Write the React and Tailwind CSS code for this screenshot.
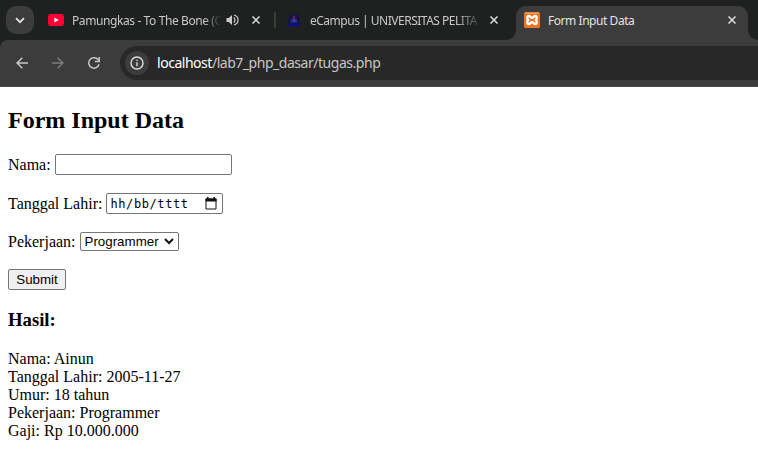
function Cross() {
  return (
    <svg width="8" height="8" viewBox="0 0 8 8" className="block shrink-0" stroke="#dedede" strokeWidth="1.5">
      <path d="M0.5 0.5 7.5 7.5M7.5 0.5 0.5 7.5" />
    </svg>
  );
}

function Speaker() {
  return (
    <svg width="13" height="12" viewBox="0 0 13 12" className="shrink-0" fill="none" stroke="#c9c9c9" strokeWidth="1.2">
      <path d="M.5 4h2.3L6 1v10L2.8 8H.5z" fill="#c9c9c9" stroke="none" />
      <path d="M7.8 3.4q2.4 2.6 0 5.2M8 1c5.4 1.4 5.4 8.6 0 10" />
    </svg>
  );
}

function Crest() {
  return (
    <svg width="14" height="16" viewBox="0 0 14 16" className="shrink-0">
      <path d="M1 8Q1 1.500 7 1.500T13 8l-1 4H2z" fill="#141440" />
      <path d="M4.500 6.500h5l1.500 4H3z" fill="#20279a" />
      <path d="M7 3.500v3" stroke="#a82420" strokeWidth="1.500" />
      <circle cx="7" cy="8.500" r="1.500" fill="#3346a5" />
      <path d="M1 11.500h12v3H1z" fill="#10107c" />
    </svg>
  );
}

function Xampp() {
  return (
    <svg width="16" height="16" viewBox="0 0 16 16" className="shrink-0">
      <rect width="16" height="16" rx="1.500" fill="#ed7522" />
      <path d="M1.500 1.200h13" stroke="#f8bd91" strokeWidth=".8" />
      <path
        d="M5 4C3 4 2.700 6.200 4.200 8 2.700 9.800 3 12 5 12c2 0 1.500-2 3-2s1 2 3 2 2.300-2.200.8-4c1.500-1.800 1.200-4-.8-4S9.500 6 8 6 7 4 5 4z"
        fill="none"
        stroke="#fff"
        strokeWidth="2.300"
      />
      <path d="M6 8h4" stroke="#ed7522" strokeWidth="1.600" />
    </svg>
  );
}

function TabStrip() {
  return (
    <div className="flex h-10 w-full items-center bg-[#1f2020] text-[12px] leading-5 text-[#c9c9c9]">
      <button className="ml-1.5 flex h-7 w-7 shrink-0 items-center justify-center rounded-[10px] bg-[#3c3c3c]">
        <svg width="10" height="7" viewBox="0 0 10 7" fill="none" stroke="#e3e3e3" strokeWidth="1.8">
          <path d="M1 1.200 5 5.200 9 1.200" />
        </svg>
      </button>
      <div className="flex w-[240px] shrink-0 items-center pl-3.5">
        <svg width="16" height="12" viewBox="0 0 16 12" className="shrink-0">
          <rect width="16" height="12" rx="3" fill="#ff0033" />
          <path d="M6.300 3.400v5.200L10.800 6z" fill="#fff" />
        </svg>
        <div className="ml-2 mr-1.5 w-[148px] overflow-hidden pt-0.5 whitespace-nowrap tracking-[-0.4px] [mask-image:linear-gradient(to_right,#000_132px,transparent_149px)]">
          Pamungkas - To The Bone (O
        </div>
        <Speaker />
        <div className="ml-[13px]"><Cross /></div>
      </div>
      <div className="h-4 w-0.5 shrink-0 bg-[#3c3c3c]" />
      <div className="flex w-[230px] shrink-0 items-center pl-[11px]">
        <Crest />
        <div className="ml-[9px] w-[167px] pt-0.5 whitespace-nowrap tracking-[-0.49px] [mask-image:linear-gradient(to_right,#000_146px,transparent_174px)]">
          eCampus | UNIVERSITAS PELITA
        </div>
        <div className="ml-[13px]"><Cross /></div>
      </div>
      <svg width="10" height="10" viewBox="0 0 10 10" className="shrink-0 self-end">
        <path d="M10 0v10H0A10 10 0 0 0 10 0z" fill="#3c3c3c" />
      </svg>
      <div className="flex h-[34px] w-[232px] shrink-0 items-center self-end rounded-t-[10px] bg-[#3c3c3c] pb-1.5 pl-2 text-[#e3e3e3]">
        <Xampp />
        <span className="ml-2 w-[180px] pt-0.5 whitespace-nowrap tracking-[-0.45px]">Form Input Data</span>
        <Cross />
      </div>
      <svg width="10" height="10" viewBox="0 0 10 10" className="shrink-0 self-end">
        <path d="M0 0v10h10A10 10 0 0 1 0 0z" fill="#3c3c3c" />
      </svg>
    </div>
  );
}

function Toolbar() {
  return (
    <div className="bg-[#1f2020]">
      <div className="flex h-[47px] items-center rounded-tl-[8px] border-b border-[#484848] bg-[#3c3c3c] pl-4">
        <svg width="12" height="12" viewBox="0 0 12 12" fill="none" stroke="#c7c7c7" strokeWidth="1.500" className="shrink-0">
          <path d="M12 6H1M6.300.7 1 6l5.300 5.300" />
        </svg>
        <svg width="12" height="12" viewBox="0 0 12 12" fill="none" stroke="#7c7c7c" strokeWidth="1.500" className="ml-6 shrink-0">
          <path d="M0 6h11M5.700.7 11 6l-5.300 5.300" />
        </svg>
        <svg width="12" height="12" viewBox="0 0 12 12" fill="none" stroke="#c7c7c7" strokeWidth="1.500" className="ml-6 shrink-0">
          <path d="M11 7.200A5.200 5.200 0 1 1 9.700 2.300L11.200 4" />
          <path d="M11.200 0v4.500H6.800" />
        </svg>
        <div className="ml-5 flex h-[34px] flex-1 items-center rounded-l-full bg-[#282828] pl-[5px]">
          <div className="flex h-6 w-6 items-center justify-center rounded-full bg-[#3c3c3c]">
            <svg width="14" height="14" viewBox="0 0 14 14" fill="none" stroke="#dedede" strokeWidth="1.400">
              <circle cx="7" cy="7" r="6" />
              <path d="M7 6.200V10.200M7 3.700v1.400" />
            </svg>
          </div>
          <span className="ml-2 whitespace-nowrap text-[14px] leading-5 tracking-[-0.47px] text-[#c7c7c7]">
            <span className="text-white">localhost</span>/lab7_php_dasar/tugas.php
          </span>
        </div>
      </div>
    </div>
  );
}

const results = ["Nama: Ainun", "Tanggal Lahir: 2005-11-27", "Umur: 18 tahun", "Pekerjaan: Programmer", "Gaji: Rp 10.000.000"];

export default function App() {
  return (
    <main className="h-[455px] w-[758px] overflow-hidden bg-white font-['Noto_Sans','Open_Sans',sans-serif]">
      <TabStrip />
      <Toolbar />
      <div className="px-2 pt-5 font-['Liberation_Serif',serif] text-[16px] leading-[18px] text-black">
        <h2 className="h-[27px] text-[24px] leading-[27px] font-bold">Form Input Data</h2>
        <form className="mt-5" onSubmit={(e) => e.preventDefault()}>
          <label className="flex h-[21px] items-center whitespace-pre">
            Nama:{" "}
            <input className="h-[21px] w-[177px] rounded-[2px] border border-[#767676] px-0.5 font-['Liberation_Sans',sans-serif] text-[13.333px] outline-none" />
          </label>
          <label className="mt-[18px] flex h-[21px] items-center whitespace-pre">
            Tanggal Lahir:{" "}
            <span className="flex h-[21px] w-[117px] items-center justify-between rounded-[2px] border border-[#767676] pr-[5px] pl-[3px] font-['DejaVu_Sans_Mono',monospace] text-[12px] tracking-[0.6px]">
              hh/bb/tttt
              <svg width="12" height="13" viewBox="0 0 12 13" className="shrink-0">
                <path d="M1 2h10v10H1z" fill="none" stroke="#111" />
                <path d="M.5 1.500h11V4.500H.5zM2 0h1.500v2H2zM8.500 0H10v2H8.500z" fill="#111" />
              </svg>
            </span>
          </label>
          <div className="mt-[18px] flex h-[19px] items-center whitespace-pre">
            Pekerjaan:{" "}
            <button type="button" className="flex h-[19px] w-[99px] items-center justify-between rounded-[2px] border border-[#767676] bg-white pr-[4px] pl-1 font-['Liberation_Sans',sans-serif] text-[13.333px] leading-[17px]">
              Programmer
              <svg width="10" height="7" viewBox="0 0 10 7" fill="none" stroke="#111" strokeWidth="2">
                <path d="M1 1 5 5 9 1" />
              </svg>
            </button>
          </div>
          <button className="mt-[18px] block h-[21px] w-[58px] rounded-[2px] border border-[#767676] bg-[#efefef] font-['Liberation_Sans',sans-serif] text-[13.333px] leading-[19px]">
            Submit
          </button>
        </form>
        <h3 className="mt-[19px] h-[21px] text-[18.72px] leading-[21px] font-bold">Hasil:</h3>
        <div className="mt-5">
          {results.map((line) => (
            <p key={line}>{line}</p>
          ))}
        </div>
      </div>
    </main>
  );
}
